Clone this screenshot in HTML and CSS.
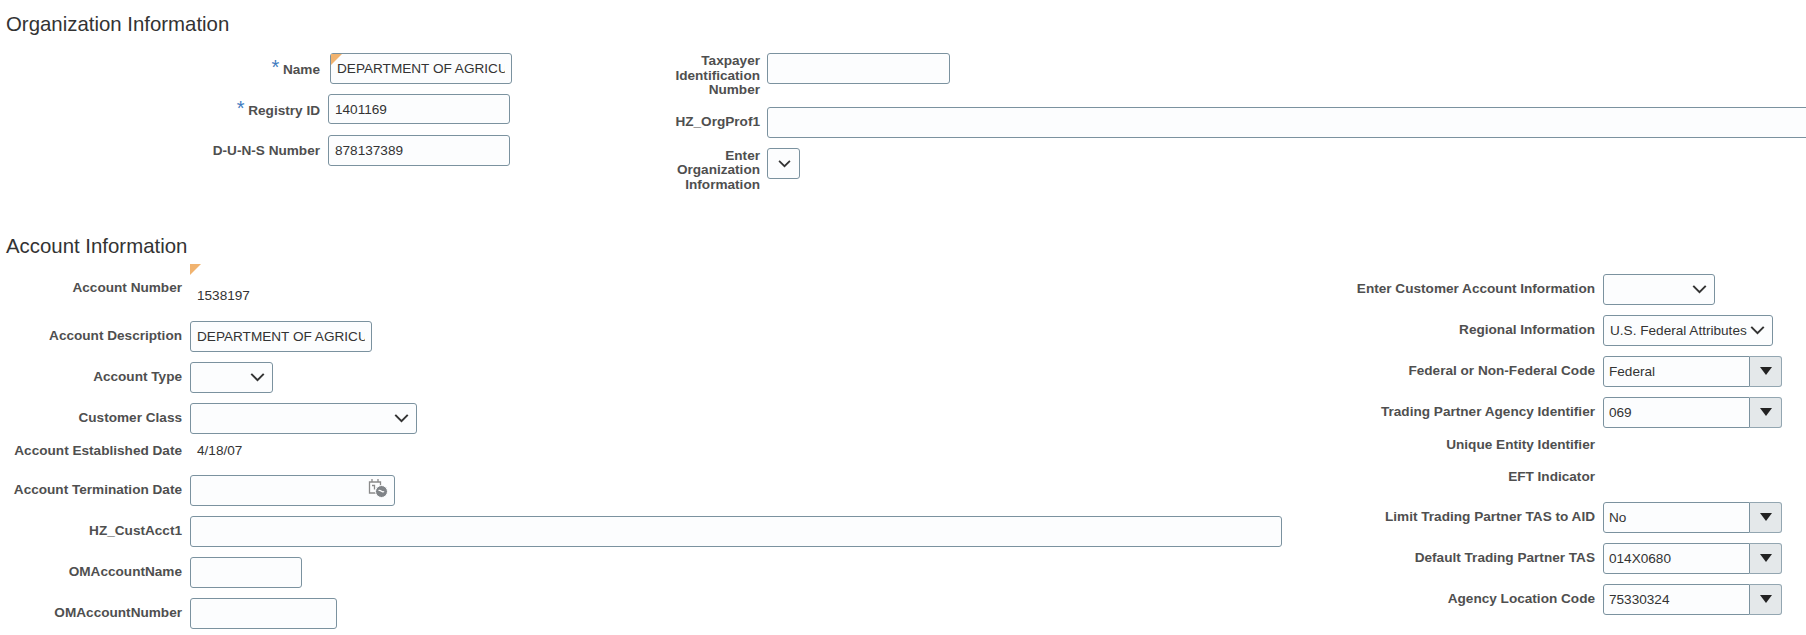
FILE: index.html
```html
<!DOCTYPE html>
<html lang="en">
<head>
  <meta charset="UTF-8">
  <meta name="viewport" content="width=device-width, initial-scale=1.0">
  <link rel="stylesheet" href="styles.css">
  <title>Organization and Account Information</title>
</head>
<body>

  <h2 class="section-title">Organization Information</h2>
  <div class="org-form">
    <div class="col org-left">
      <div class="row">
        <div class="label"><span><span class="req">*</span> Name</span></div>
        <div class="field w-182 nudge"><i class="flag"></i><span class="clip">DEPARTMENT OF AGRICULTURE</span></div>
      </div>
      <div class="row">
        <div class="label"><span><span class="req">*</span> Registry ID</span></div>
        <div class="field w-182 short"><span class="clip">1401169</span></div>
      </div>
      <div class="row">
        <div class="label">D-U-N-S Number</div>
        <div class="field w-182"><span class="clip">878137389</span></div>
      </div>
    </div>
    <div class="col org-right">
      <div class="row">
        <div class="label">Taxpayer Identification Number</div>
        <div class="field w-183"></div>
      </div>
      <div class="row">
        <div class="label">HZ_OrgProf1</div>
        <div class="field w-long"></div>
      </div>
      <div class="row">
        <div class="label">Enter Organization Information</div>
        <div class="field select w-33">
          <svg class="chev" viewBox="0 0 12 8"><path d="M1 1.500 6 6.500l5-5"/></svg>
        </div>
      </div>
    </div>
  </div>

  <h2 class="section-title second">Account Information</h2>
  <div class="account-form">
    <div class="col acct-left">
      <div class="row row-number">
        <div class="label">Account Number</div>
        <div class="value"><i class="flag"></i>1538197</div>
      </div>
      <div class="row">
        <div class="label">Account Description</div>
        <div class="field w-182 tight"><span class="clip">DEPARTMENT OF AGRICULTURE</span></div>
      </div>
      <div class="row">
        <div class="label">Account Type</div>
        <div class="field select w-83">
          <svg class="chev" viewBox="0 0 12 8"><path d="M1 1.500 6 6.500l5-5"/></svg>
        </div>
      </div>
      <div class="row">
        <div class="label">Customer Class</div>
        <div class="field select w-227">
          <svg class="chev" viewBox="0 0 12 8"><path d="M1 1.500 6 6.500l5-5"/></svg>
        </div>
      </div>
      <div class="row row-read">
        <div class="label">Account Established Date</div>
        <div class="value">4/18/07</div>
      </div>
      <div class="row">
        <div class="label">Account Termination Date</div>
        <div class="field select w-205">
          <svg class="cal" viewBox="0 0 20 20">
            <path class="cal-line" d="M1.500 4h11v11h-11zM4 1v3M10 1v3"/>
            <path class="cal-line" d="M4 7.500h2.500v4"/>
            <circle class="cal-dot" cx="13.500" cy="13.500" r="6"/>
            <path class="cal-hand" d="M10.500 12.500c1-.5 2 0 3 .8s2 .7 2.500 0"/>
          </svg>
        </div>
      </div>
      <div class="row">
        <div class="label">HZ_CustAcct1</div>
        <div class="field w-1092"></div>
      </div>
      <div class="row">
        <div class="label">OMAccountName</div>
        <div class="field w-112"></div>
      </div>
      <div class="row">
        <div class="label">OMAccountNumber</div>
        <div class="field w-147"></div>
      </div>
    </div>

    <div class="col acct-right">
      <div class="row">
        <div class="label">Enter Customer Account Information</div>
        <div class="field select w-112">
          <svg class="chev" viewBox="0 0 12 8"><path d="M1 1.500 6 6.500l5-5"/></svg>
        </div>
      </div>
      <div class="row">
        <div class="label">Regional Information</div>
        <div class="field select w-170">
          <span class="clip">U.S. Federal Attributes</span>
          <svg class="chev" viewBox="0 0 12 8"><path d="M1 1.500 6 6.500l5-5"/></svg>
        </div>
      </div>
      <div class="row">
        <div class="label">Federal or Non-Federal Code</div>
        <div class="combo">
          <div class="field"><span class="clip">Federal</span></div>
          <div class="combo-btn"><svg class="tri" viewBox="0 0 12 8"><path d="M0 0h12L6 8z"/></svg></div>
        </div>
      </div>
      <div class="row">
        <div class="label">Trading Partner Agency Identifier</div>
        <div class="combo">
          <div class="field"><span class="clip">069</span></div>
          <div class="combo-btn"><svg class="tri" viewBox="0 0 12 8"><path d="M0 0h12L6 8z"/></svg></div>
        </div>
      </div>
      <div class="row row-read">
        <div class="label">Unique Entity Identifier</div>
      </div>
      <div class="row row-read">
        <div class="label">EFT Indicator</div>
      </div>
      <div class="row">
        <div class="label">Limit Trading Partner TAS to AID</div>
        <div class="combo">
          <div class="field"><span class="clip">No</span></div>
          <div class="combo-btn"><svg class="tri" viewBox="0 0 12 8"><path d="M0 0h12L6 8z"/></svg></div>
        </div>
      </div>
      <div class="row">
        <div class="label">Default Trading Partner TAS</div>
        <div class="combo">
          <div class="field"><span class="clip">014X0680</span></div>
          <div class="combo-btn"><svg class="tri" viewBox="0 0 12 8"><path d="M0 0h12L6 8z"/></svg></div>
        </div>
      </div>
      <div class="row">
        <div class="label">Agency Location Code</div>
        <div class="combo">
          <div class="field"><span class="clip">75330324</span></div>
          <div class="combo-btn"><svg class="tri" viewBox="0 0 12 8"><path d="M0 0h12L6 8z"/></svg></div>
        </div>
      </div>
    </div>
  </div>

</body>
</html>
```

FILE: styles.css
```css
body {
  font-family: "Liberation Sans", Arial, sans-serif;
  font-size: 13.6px;
  margin: 0;
  padding: 0;
  background-color: #fff;
  color: #333;
  height: 635px;
  overflow: hidden;
}

.section-title {
  font-size: 20.4px;
  font-weight: normal;
  line-height: 28px;
  color: #333;
  margin: 10px 0 15px;
  padding-left: 6px;
}

.section-title.second {
  margin: 40px 0 4px;
}

.org-form {
  display: flex;
}

.account-form {
  display: flex;
  justify-content: space-between;
  padding-right: 24px;
}

.col {
  display: flex;
  flex-direction: column;
  gap: 10px;
}

.row {
  display: flex;
  align-items: flex-start;
  gap: 8px;
}

.label {
  min-height: 30px;
  padding-bottom: 1px;
  display: flex;
  align-items: center;
  justify-content: flex-end;
  text-align: right;
  font-weight: bold;
  line-height: 15px;
  color: #4f4f4f;
  flex-shrink: 0;
}

.org-left { width: 668px; flex-shrink: 0; }
.org-left .label { width: 320px; }
.org-right { flex-shrink: 0; }
.org-right .label {
  width: 92px;
  line-height: 14.6px;
  padding: 1px 0 0;
  margin-bottom: -1px;
}
.org-right .row { gap: 7px; }

.acct-left .label { width: 182px; }
.acct-left .row-read { height: 21px; }
.acct-right { padding-top: 10px; }
.acct-right .label { width: 255px; }

.req {
  color: #3f7bbf;
  font-size: 20px;
  font-weight: normal;
}

.field {
  position: relative;
  box-sizing: border-box;
  height: 31px;
  display: flex;
  align-items: center;
  padding: 0 6px;
  background-color: #fcfdfe;
  border: 1px solid #7b929f;
  border-radius: 3px;
  flex-shrink: 0;
}

.clip {
  flex: 1;
  overflow: hidden;
  white-space: nowrap;
}

.nudge { margin-left: 2px; }
.short { height: 30px; }

.w-33 { width: 33px; }
.w-83 { width: 83px; }
.w-112 { width: 112px; }
.w-147 { width: 147px; }
.w-170 { width: 170px; }
.w-182 { width: 182px; }
.w-183 { width: 183px; }
.w-205 { width: 205px; }
.w-227 { width: 227px; }
.w-1092 { width: 1092px; }
.w-long { width: 1100px; }

.select { justify-content: flex-end; }

.chev {
  width: 15px;
  height: 10px;
  margin-right: 1px;
  flex-shrink: 0;
  fill: none;
  stroke: #333;
  stroke-width: 1.600;
}

.w-33 .chev {
  width: 13px;
  height: 9px;
  margin-right: 2px;
}

.cal {
  width: 20px;
  height: 20px;
  margin: -4px 0 0 0;
}

.cal-line {
  fill: none;
  stroke: #8a8a8a;
  stroke-width: 1.300;
}

.cal-dot { fill: #808488; stroke: #fcfdfe; }

.cal-hand {
  fill: none;
  stroke: #fff;
  stroke-width: 1.200;
}

.flag {
  position: absolute;
  top: 0;
  left: 0;
  width: 0;
  height: 0;
  border-top: 11px solid #f1b36f;
  border-right: 11px solid transparent;
}

.value {
  position: relative;
  padding-left: 7px;
}

.row-number { height: 47px; }
.row-number .label { min-height: 0; margin-top: 16px; }
.row-number .value { flex: 1; height: 47px; padding-top: 24px; box-sizing: border-box; }

.row-read { height: 22px; }
.row-read .label { min-height: 0; margin-top: -1px; }
.row-read .value { line-height: 15px; margin-top: -1px; }

.combo {
  display: flex;
  width: 179px;
}

.combo .field {
  width: 147px;
  padding: 0 5px;
  border-radius: 3px 0 0 3px;
}

.combo-btn {
  box-sizing: border-box;
  width: 32px;
  height: 31px;
  display: flex;
  align-items: center;
  justify-content: center;
  background-color: #e4e8ea;
  border: 1px solid #93a6b1;
  border-left: none;
  border-radius: 0 3px 3px 0;
}

.tri {
  width: 12px;
  height: 8px;
  fill: #222;
}
```
